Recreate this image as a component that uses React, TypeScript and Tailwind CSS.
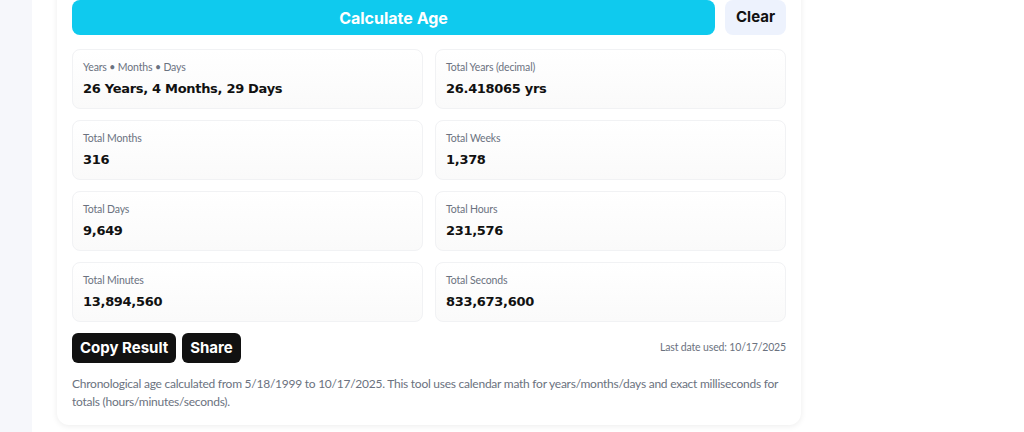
import React from "react";

const stats = [
  { label: "Years • Months • Days", value: "26 Years, 4 Months, 29 Days" },
  { label: "Total Years (decimal)", value: "26.418065 yrs" },
  { label: "Total Months", value: "316" },
  { label: "Total Weeks", value: "1,378" },
  { label: "Total Days", value: "9,649" },
  { label: "Total Hours", value: "231,576" },
  { label: "Total Minutes", value: "13,894,560" },
  { label: "Total Seconds", value: "833,673,600" },
];

const heading = { fontFamily: "Inter, 'Noto Sans', sans-serif" };
const body = { fontFamily: "Lato, 'Open Sans', sans-serif" };
const mono = { fontFamily: "'DejaVu Sans', Verdana, sans-serif" };

function StatCard({ label, value }: { label: string; value: string }) {
  return (
    <div className="h-[60px] rounded-lg border border-[#f1f2f4] bg-gradient-to-b from-white to-[#fafafa] px-[10px] pt-[10px]">
      <div className="text-[10.5px] leading-[15px] tracking-[-0.15px] text-[#6b7280]" style={body}>
        {label}
      </div>
      <div
        className="mt-[5px] text-[13px] font-bold leading-[18px] tracking-[-0.3px] text-[#111]"
        style={mono}
      >
        {value}
      </div>
    </div>
  );
}

export default function App() {
  return (
    <div className="flex h-[432px] w-full overflow-hidden bg-white">
      <div className="w-8 shrink-0 bg-[#f6f7fb]" />
      <div className="flex-1 pl-[25px]">
        <div className="-mt-4 w-[744px] rounded-xl bg-white px-[15px] pt-4 pb-[14px] shadow-[0_1px_6px_rgba(0,0,0,0.08)]">
          <div className="flex gap-[10px]">
            <button
              className="h-[35px] flex-1 rounded-lg bg-[#0fcaee] text-[16px] font-bold text-white"
              style={heading}
            >
              Calculate Age
            </button>
            <button
              className="h-[35px] w-[61px] rounded-lg bg-[#edf2fd] text-[15px] font-bold text-[#111]"
              style={heading}
            >
              Clear
            </button>
          </div>

          <div className="mt-[14px] grid grid-cols-2 gap-x-3 gap-y-[11px]">
            {stats.map((s) => (
              <StatCard key={s.label} label={s.label} value={s.value} />
            ))}
          </div>

          <div className="mt-[11px] flex items-center">
            <div className="flex gap-[6px]">
              <button
                className="h-[30px] rounded-md bg-[#111] px-[8px] text-[15px] font-bold text-white"
                style={heading}
              >
                Copy Result
              </button>
              <button
                className="h-[30px] rounded-md bg-[#111] px-[8px] text-[15px] font-bold text-white"
                style={heading}
              >
                Share
              </button>
            </div>
            <div className="ml-auto text-[10.5px] tracking-[-0.15px] text-[#6b7280]" style={body}>
              Last date used: 10/17/2025
            </div>
          </div>

          <p
            className="mt-[12px] text-[12px] leading-[18px] tracking-[-0.25px] text-[#6b7280]"
            style={body}
          >
            Chronological age calculated from 5/18/1999 to 10/17/2025. This tool uses calendar math for
            years/months/days and exact milliseconds for totals (hours/minutes/seconds).
          </p>
        </div>
      </div>
    </div>
  );
}
